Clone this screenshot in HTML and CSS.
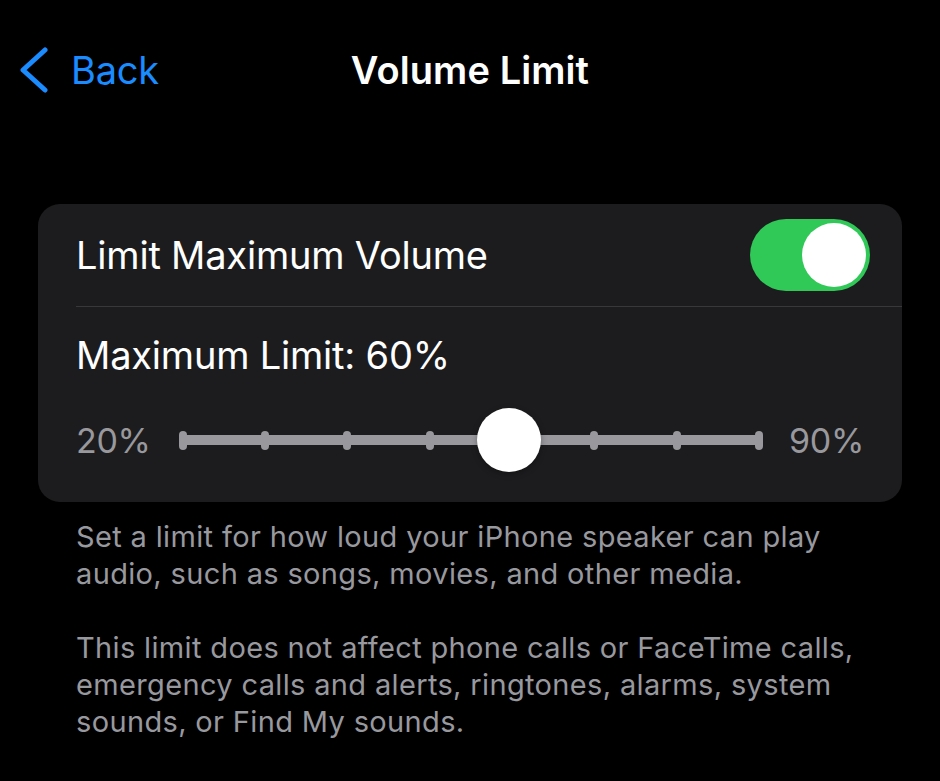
FILE: index.html
```html
<!DOCTYPE html>
<html lang="en">
<head>
  <meta charset="UTF-8">
  <title>Volume Limit</title>

  <link rel="stylesheet" href="styles.css">
</head>
<body>
  <div id="screen">
    <div class="nav-bar">
      <a class="nav-back">
        <svg class="chevron" width="30" height="48" viewBox="0 0 30 48">
          <path d="M25 4 L3 24 L25 44" fill="none" stroke="#1a8cff" stroke-width="5" stroke-linecap="round" stroke-linejoin="round"/>
        </svg>
        <span class="nav-back-label">Back</span>
      </a>
      <div class="nav-title">Volume Limit</div>
      <div></div>
    </div>

    <div class="group">
      <div class="cell cell-switch">
        <span class="cell-label">Limit Maximum Volume</span>
        <span class="switch on"><span class="switch-knob"></span></span>
      </div>
      <div class="cell cell-slider">
        <div class="cell-label">Maximum Limit: 60%</div>
        <div class="slider-row">
          <span class="slider-end">20%</span>
          <div class="slider">
            <div class="slider-track"></div>
            <div class="slider-ticks">
              <span class="tick"></span>
              <span class="tick"></span>
              <span class="tick"></span>
              <span class="tick"></span>
              <span class="tick"></span>
              <span class="tick"></span>
              <span class="tick"></span>
              <span class="tick"></span>
            </div>
            <span class="slider-thumb"></span>
          </div>
          <span class="slider-end">90%</span>
        </div>
      </div>
    </div>

    <div class="group-footer">
      <p>Set a limit for how loud your iPhone speaker can play audio, such as songs, movies, and other media.</p>
      <p>This limit does not affect phone calls or FaceTime calls, emergency calls and alerts, ringtones, alarms, system sounds, or Find My sounds.</p>
    </div>
  </div>
</body>
</html>
```

FILE: styles.css
```css
body {
  background-color: #000;
  margin: 0;
  font-family: Inter, "Noto Sans", sans-serif;
  color: #fff;
}

a {
  cursor: pointer;
}

#screen {
  width: 940px;
  height: 781px;
  overflow: hidden;
}

.nav-bar {
  display: grid;
  grid-template-columns: 1fr auto 1fr;
  align-items: center;
  height: 140px;
}

.nav-back {
  display: flex;
  align-items: center;
  color: #1a8cff;
  padding-left: 20px;
}

.chevron {
  display: block;
}

.nav-back-label {
  font-size: 38px;
  margin-left: 21px;
  letter-spacing: -0.2px;
}

.nav-title {
  font-size: 38px;
  font-weight: 600;
  letter-spacing: 0.1px;
}

.group {
  background-color: #1c1c1e;
  border-radius: 22px;
  margin: 64px 38px 0 38px;
  padding-left: 38px;
}

.cell-label {
  font-size: 38px;
  letter-spacing: -0.2px;
}

.cell-switch {
  display: flex;
  align-items: center;
  justify-content: space-between;
  height: 102px;
  padding-right: 32px;
  border-bottom: 1px solid #38383a;
}

.switch {
  display: flex;
  align-items: center;
  width: 120px;
  height: 72px;
  border-radius: 36px;
  background-color: #30c957;
  box-sizing: border-box;
  padding: 4px;
}

.switch.on {
  justify-content: flex-end;
}

.switch-knob {
  width: 64px;
  height: 64px;
  border-radius: 50%;
  background-color: #fff;
}

.cell-slider {
  padding: 25px 38px 0 0;
  height: 195px;
  box-sizing: border-box;
}

.slider-row {
  display: flex;
  align-items: center;
  margin-top: 30px;
  height: 64px;
}

.slider-end {
  font-size: 34px;
  color: #98989d;
  letter-spacing: -0.3px;
}

.slider {
  position: relative;
  flex: 1;
  height: 64px;
  margin: 0 26px 0 28px;
}

.slider-track {
  position: absolute;
  left: 2px;
  right: 2px;
  top: 27px;
  height: 10px;
  background-color: #98989d;
}

.slider-ticks {
  display: flex;
  justify-content: space-between;
  align-items: center;
  height: 64px;
}

.tick {
  width: 8px;
  height: 19px;
  border-radius: 4px;
  background-color: #98989d;
}

.slider-thumb {
  position: absolute;
  top: 0;
  left: calc(57.14% - 36px);
  width: 64px;
  height: 64px;
  border-radius: 50%;
  background-color: #fff;
  box-shadow: 0 2px 6px rgba(0, 0, 0, 0.3);
}

.group-footer {
  padding: 16px 38px 0 76px;
  color: #98989f;
  font-size: 29px;
  line-height: 37px;
  letter-spacing: 0.35px;
}

.group-footer p {
  margin: 0 0 37px 0;
}
```
